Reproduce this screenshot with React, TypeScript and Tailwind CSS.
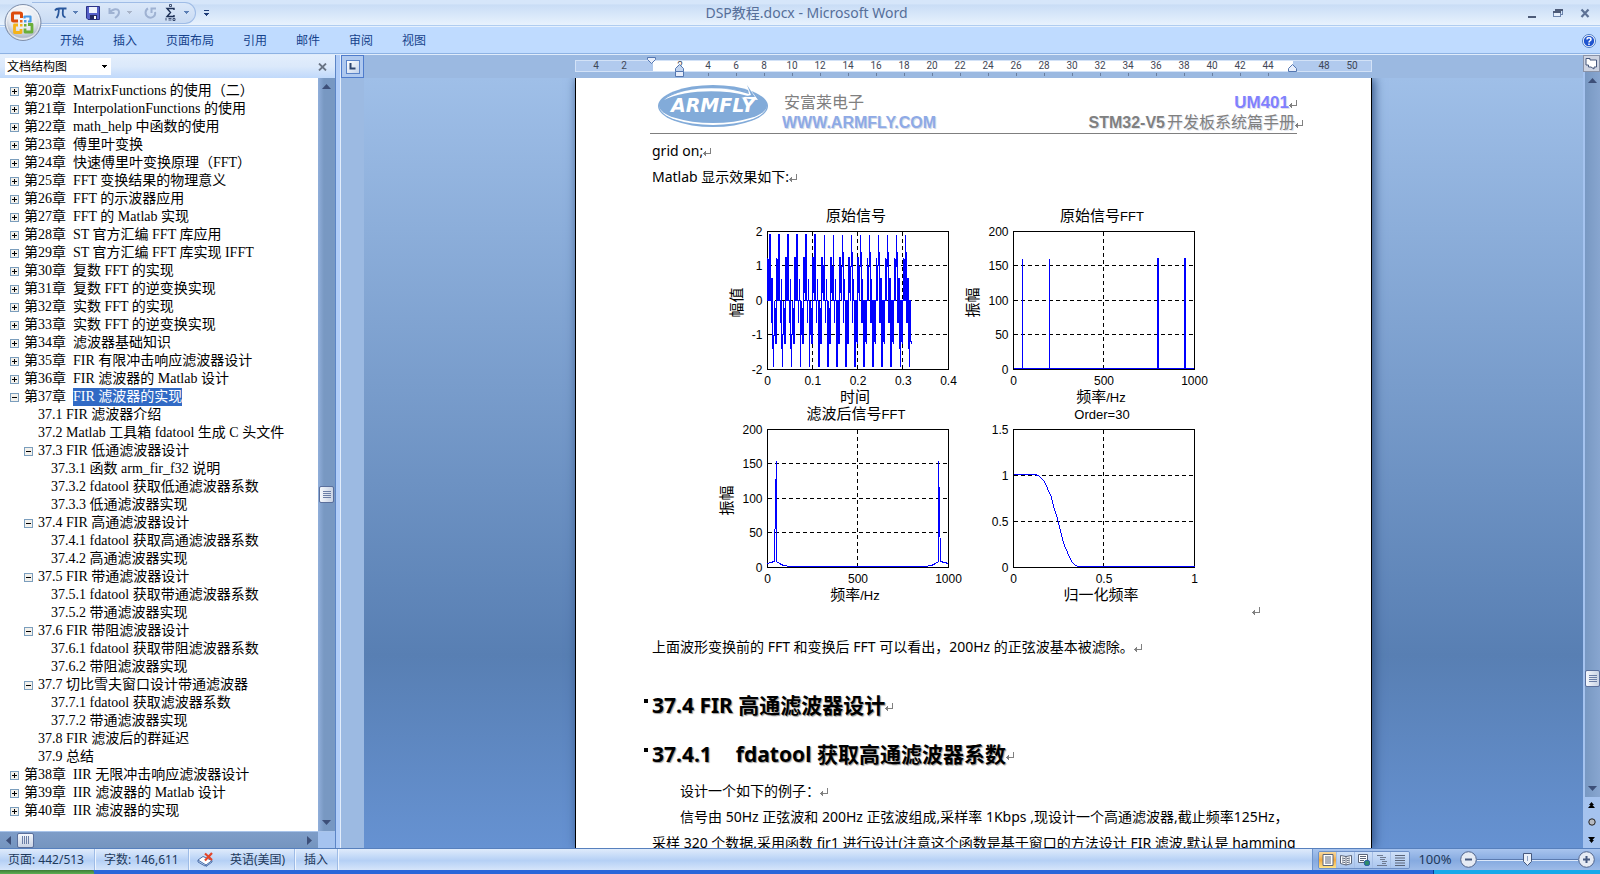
import React, { useState } from 'react';

interface TreeItem {
    level: number;
    chapter?: string;
    title: string;
    toggle?: 'plus' | 'minus';
    selected?: boolean;
}

const TREE: TreeItem[] = [
    { level: 0, chapter: '第20章', title: 'MatrixFunctions 的使用（二）', toggle: 'plus' },
    { level: 0, chapter: '第21章', title: 'InterpolationFunctions 的使用', toggle: 'plus' },
    { level: 0, chapter: '第22章', title: 'math_help 中函数的使用', toggle: 'plus' },
    { level: 0, chapter: '第23章', title: '傅里叶变换', toggle: 'plus' },
    { level: 0, chapter: '第24章', title: '快速傅里叶变换原理（FFT）', toggle: 'plus' },
    { level: 0, chapter: '第25章', title: 'FFT 变换结果的物理意义', toggle: 'plus' },
    { level: 0, chapter: '第26章', title: 'FFT 的示波器应用', toggle: 'plus' },
    { level: 0, chapter: '第27章', title: 'FFT 的 Matlab 实现', toggle: 'plus' },
    { level: 0, chapter: '第28章', title: 'ST 官方汇编 FFT 库应用', toggle: 'plus' },
    { level: 0, chapter: '第29章', title: 'ST 官方汇编 FFT 库实现 IFFT', toggle: 'plus' },
    { level: 0, chapter: '第30章', title: '复数 FFT 的实现', toggle: 'plus' },
    { level: 0, chapter: '第31章', title: '复数 FFT 的逆变换实现', toggle: 'plus' },
    { level: 0, chapter: '第32章', title: '实数 FFT 的实现', toggle: 'plus' },
    { level: 0, chapter: '第33章', title: '实数 FFT 的逆变换实现', toggle: 'plus' },
    { level: 0, chapter: '第34章', title: '滤波器基础知识', toggle: 'plus' },
    { level: 0, chapter: '第35章', title: 'FIR 有限冲击响应滤波器设计', toggle: 'plus' },
    { level: 0, chapter: '第36章', title: 'FIR 滤波器的 Matlab 设计', toggle: 'plus' },
    { level: 0, chapter: '第37章', title: 'FIR 滤波器的实现', toggle: 'minus', selected: true },
    { level: 1, title: '37.1 FIR 滤波器介绍' },
    { level: 1, title: '37.2 Matlab 工具箱 fdatool 生成 C 头文件' },
    { level: 1, title: '37.3 FIR 低通滤波器设计', toggle: 'minus' },
    { level: 2, title: '37.3.1 函数 arm_fir_f32 说明' },
    { level: 2, title: '37.3.2 fdatool 获取低通滤波器系数' },
    { level: 2, title: '37.3.3 低通滤波器实现' },
    { level: 1, title: '37.4 FIR 高通滤波器设计', toggle: 'minus' },
    { level: 2, title: '37.4.1 fdatool 获取高通滤波器系数' },
    { level: 2, title: '37.4.2 高通滤波器实现' },
    { level: 1, title: '37.5 FIR 带通滤波器设计', toggle: 'minus' },
    { level: 2, title: '37.5.1 fdatool 获取带通滤波器系数' },
    { level: 2, title: '37.5.2 带通滤波器实现' },
    { level: 1, title: '37.6 FIR 带阻滤波器设计', toggle: 'minus' },
    { level: 2, title: '37.6.1 fdatool 获取带阻滤波器系数' },
    { level: 2, title: '37.6.2 带阻滤波器实现' },
    { level: 1, title: '37.7 切比雪夫窗口设计带通滤波器', toggle: 'minus' },
    { level: 2, title: '37.7.1 fdatool 获取滤波器系数' },
    { level: 2, title: '37.7.2 带通滤波器实现' },
    { level: 1, title: '37.8 FIR 滤波后的群延迟' },
    { level: 1, title: '37.9 总结' },
    { level: 0, chapter: '第38章', title: 'IIR 无限冲击响应滤波器设计', toggle: 'plus' },
    { level: 0, chapter: '第39章', title: 'IIR 滤波器的 Matlab 设计', toggle: 'plus' },
    { level: 0, chapter: '第40章', title: 'IIR 滤波器的实现', toggle: 'plus' },
];

const LEVEL_PAD = ['pl-[10px]', 'pl-6', 'pl-[37px]'];

const TABS = ['开始', '插入', '页面布局', '引用', '邮件', '审阅', '视图'];

const UI_FONT = 'font-["Noto_Sans","Noto_Sans_CJK_SC",sans-serif]';

/* ---------- small glyphs ---------- */

const DropArrow = ({ className = 'text-[#5b7fb5]' }: { className?: string }) => (
    <svg width="5" height="3" viewBox="0 0 5 3" className={className} shapeRendering="crispEdges">
        <path d="M0 0h5v1H0zM1 1h3v1H1zM2 2h1v1H2z" fill="currentColor" />
    </svg>
);

const ReturnMark = () => (
    <svg width="8" height="8" viewBox="0 0 8 8" className="inline-block shrink-0" shapeRendering="crispEdges">
        <path d="M7.5 0v5.500H1" fill="none" stroke="#808080" />
        <path d="M0 5h1v1H0zM1 4h1v3H1zM2 3h1v5H2z" fill="#808080" />
    </svg>
);

const ScrollArrow = ({ d, label }: { d: string; label: string }) => (
    <button aria-label={label} className="flex h-[17px] w-full items-center justify-center">
        <svg width="9" height="9" viewBox="0 0 9 9">
            <path d={d} fill="#3d4f78" />
        </svg>
    </button>
);

const UP = 'M0 7 4.500 2 9 7z';
const DOWN = 'M0 2 4.500 7 9 2z';
const LEFT = 'M7 0 2 4.500 7 9z';
const RIGHT = 'M2 0 7 4.500 2 9z';

const OfficeButton = () => (
    <button aria-label="Office" className="absolute left-1 top-1 z-10 h-[38px] w-[38px]">
        <svg width="38" height="38" viewBox="0 0 38 38">
            <defs>
                <radialGradient id="orb" cx="50%" cy="30%" r="75%">
                    <stop offset="0" stopColor="#fdfdfe" />
                    <stop offset="0.550" stopColor="#e4e8ef" />
                    <stop offset="0.800" stopColor="#b3bccb" />
                    <stop offset="1" stopColor="#f4f7fb" />
                </radialGradient>
            </defs>
            <circle cx="19" cy="18.500" r="18" fill="url(#orb)" stroke="#7f90ac" />
            <circle cx="19" cy="18.500" r="16.500" fill="none" stroke="#fff" strokeOpacity="0.700" />
            <g fill="none" strokeLinejoin="round">
                <path d="M14 17H9.500Q8.500 17 8.500 16V10Q8.500 9 9.500 9H16Q17.500 9 17.500 10V14" stroke="#dd4c0c" strokeWidth="3" />
                <path d="M20.500 14.500V12.500H26.500V17.500H24" stroke="#4a9be6" strokeWidth="2.200" />
                <path d="M14 21H10.500V28.500H17V25" stroke="#f5b31a" strokeWidth="2.800" />
                <path d="M24 20.500H28V28H21V24.500" stroke="#6aae3a" strokeWidth="2.800" />
            </g>
            <path d="M16 16h2.500v2.500H16z" fill="#e8661c" />
            <path d="M20 16h2.500v2.500H20z" fill="#4a9be6" />
            <path d="M16 20h2.500v2.500H16z" fill="#f5b31a" />
            <path d="M20 20h2.500v2.500H20z" fill="#6aae3a" />
        </svg>
    </button>
);

/* ---------- title bar + tabs ---------- */

const TitleBar = () => (
    <header className="flex h-[26px] shrink-0 items-center border-b border-[#b0cdf0] bg-linear-to-b from-[#d6e6fa] from-15% via-[#c9ddf6] via-20% to-[#e8f2fd] pl-8">
        <div className="flex h-[22px] w-[164px] items-center gap-2 rounded-r-full border border-l-0 border-[#9fbce6] bg-linear-to-b from-[#dbe8f9] to-[#c9dbf3] pl-[22px]">
            <button aria-label="公式" className="flex items-center gap-1.5">
                <svg width="13" height="12" viewBox="0 0 13 12">
                    <path d="M1 3.500C2 1.500 3 1.500 5 1.500H12.500M4.800 2C4.800 6 4.500 9 2.500 11M9 2C8.500 7 8.500 10.500 11.500 10" fill="none" stroke="#29579c" strokeWidth="1.800" />
                </svg>
                <DropArrow />
            </button>
            <button aria-label="保存">
                <svg width="14" height="14" viewBox="0 0 14 14">
                    <path d="M.5.5h13v13H2L.5 12z" fill="#5560c8" stroke="#2b3387" />
                    <path d="M3 1h8v6H3z" fill="#eef3fc" />
                    <path d="M4 9h7v4.500H4z" fill="#23285e" />
                    <path d="M8 10h2v3H8z" fill="#fff" />
                </svg>
            </button>
            <button aria-label="撤消" className="flex items-center gap-1.5">
                <svg width="13" height="12" viewBox="0 0 13 12">
                    <path d="M1.500 1v5h5M2 5.500C4 2 10.500.5 11 5c.2 3-2 4.500-4 6" fill="none" stroke="#9fb2d2" strokeWidth="2" />
                </svg>
                <DropArrow className="text-[#a9b4c8]" />
            </button>
            <button aria-label="恢复" className="ml-1">
                <svg width="13" height="12" viewBox="0 0 13 12">
                    <path d="M4 1.500C1 3 .5 8 4 10c4 2 8-1 7-5M7.500 6V1.500H12" fill="none" stroke="#9fb2d2" strokeWidth="2" />
                </svg>
            </button>
            <button aria-label="求和" className="flex items-center gap-2">
                <svg width="11" height="17" viewBox="0 0 11 17">
                    <path d="M9 6V4.500H2L5.500 8.500 2 12.500H9V11" fill="none" stroke="#1c2f55" strokeWidth="1.400" />
                    <path d="M4.500.5h2v2h-2zM1 14v2.500M3.500 14.500h3M3.500 16h3M8 14.500h2v2H8z" fill="none" stroke="#1c2f55" strokeWidth="0.800" />
                </svg>
                <DropArrow />
            </button>
        </div>
        <button aria-label="自定义快速访问工具栏" className="ml-2 flex flex-col items-center gap-0.5">
            <span className="h-px w-[5px] bg-[#1e3c78]" />
            <DropArrow className="text-[#1e3c78]" />
        </button>
        <h1 className="min-w-0 flex-1 truncate pr-[124px] text-center text-sm leading-5 text-[#566f99]">
            DSP教程.docx - Microsoft Word
        </h1>
        <div className="flex w-[72px] items-center gap-[17px] pr-2">
            <button aria-label="最小化" className="h-3">
                <svg width="8" height="12" viewBox="0 0 8 12"><path d="M0 9h8v2H0z" fill="#4d5b78" /></svg>
            </button>
            <button aria-label="还原" className="h-3">
                <svg width="10" height="12" viewBox="0 0 10 12" shapeRendering="crispEdges">
                    <path d="M2.500 5V2.500H9.500V7.500H7" fill="none" stroke="#6c84ac" />
                    <path d="M.5 5.500h7v4h-7z" fill="#e4eefb" stroke="#6c84ac" />
                    <path d="M2 2h8v2H2zM0 4h8v2H0z" fill="#4d5b78" />
                </svg>
            </button>
            <button aria-label="关闭" className="h-3">
                <svg width="10" height="12" viewBox="0 0 10 12">
                    <path d="M1.500 2.500 8.500 10M8.500 2.500 1.500 10" stroke="#5e7295" strokeWidth="2.200" />
                </svg>
            </button>
        </div>
    </header>
);

const RibbonTabs = () => (
    <nav className="flex h-[29px] shrink-0 items-center gap-px border-b border-[#e0ecfb] bg-[#bfdbff] pl-[46px] pr-1 pt-0.5 shadow-[inset_0_1px_0_#e6f1fe,inset_0_-1px_0_#8db2e3]">
        {TABS.map((tab) => (
            <button key={tab} className="px-[14px] text-xs leading-5 text-[#15428b]">
                {tab}
            </button>
        ))}
        <button aria-label="帮助" className="ml-auto">
            <svg width="14" height="14" viewBox="0 0 14 14">
                <circle cx="7" cy="7" r="6.500" fill="#fff" stroke="#4b7bc4" />
                <circle cx="7" cy="7" r="5.200" fill="#1f55d0" />
                <path d="M5 5.500C5 3.200 9 3.300 9 5.400 9 6.800 7 6.700 7 8.400M7 9.500v1.400" fill="none" stroke="#fff" strokeWidth="1.500" />
            </svg>
        </button>
    </nav>
);

/* ---------- document map ---------- */

const Toggle = ({ kind }: { kind: 'plus' | 'minus' }) => (
    <button aria-label={kind === 'plus' ? '展开' : '折叠'} className="h-[9px] w-[9px] shrink-0">
        <svg width="9" height="9" viewBox="0 0 9 9" shapeRendering="crispEdges">
            <rect x="0.500" y="0.500" width="8" height="8" fill="#f3f1ec" stroke="#7b9ebd" />
            <path d={kind === 'plus' ? 'M2 4h5v1H2zM4 2h1v5H4z' : 'M2 4h5v1H2z'} fill="#000" />
        </svg>
    </button>
);

const VerticalThumb = () => (
    <div className="flex h-[17px] w-[15px] shrink-0 flex-col items-center justify-center gap-px rounded-xs border border-[#5a6f9c] bg-linear-to-r from-[#f4f7fc] to-[#c9d3e4]">
        {[0, 1, 2, 3].map((n) => (
            <span key={n} className="h-px w-2 bg-[#6b7ea6]" />
        ))}
    </div>
);

const DocumentMap = () => (
    <aside className="flex w-[336px] shrink-0 flex-col border-r border-[#5c85c6] bg-white">
        <div className="flex h-[23px] shrink-0 items-center justify-between bg-linear-to-b from-[#e3eefc] via-[#dbe9fb] to-[#c0d9fb] pl-[5px] pr-2">
            <label className="relative flex h-[17px] w-[106px] items-center bg-white">
                <select aria-label="窗格" className="w-full appearance-none bg-transparent pl-0.5 text-xs leading-4 text-black outline-none">
                    <option>文档结构图</option>
                </select>
                <span className="absolute right-1 top-[7px]">
                    <DropArrow className="text-black" />
                </span>
            </label>
            <button aria-label="关闭窗格">
                <svg width="9" height="8" viewBox="0 0 9 8">
                    <path d="M1 .5 8 7.500M8 .5 1 7.500" stroke="#6a7484" strokeWidth="1.800" />
                </svg>
            </button>
        </div>
        <div className="flex min-h-0 flex-1">
            <ul className='min-w-0 flex-1 overflow-hidden pt-1 font-["Liberation_Serif","Noto_Sans_CJK_SC",serif] text-sm leading-[18px] text-black'>
                {TREE.map((item) => (
                    <li key={(item.chapter ?? '') + item.title} className={`flex h-[18px] items-center gap-[5px] whitespace-nowrap ${LEVEL_PAD[item.level]}`}>
                        {item.toggle ? <Toggle kind={item.toggle} /> : <span className="w-[9px]" />}
                        {item.chapter && <span className="w-11">{item.chapter}</span>}
                        <a href="#doc" className={item.selected ? 'h-[18px] bg-[#316ac5] text-white' : ''}>
                            {item.title}
                        </a>
                    </li>
                ))}
            </ul>
            <div className="flex w-[17px] shrink-0 flex-col items-center bg-linear-to-r from-[#91afdb] to-[#7898c2] to-35%">
                <ScrollArrow d={UP} label="向上滚动" />
                <div className="flex-[391]" />
                <VerticalThumb />
                <div className="flex-[311]" />
                <ScrollArrow d={DOWN} label="向下滚动" />
            </div>
        </div>
        <div className="flex h-[17px] shrink-0 border-t border-[#a9c4ea] bg-[#a5c3ef]">
            <div className="flex flex-1 items-center bg-linear-to-b from-[#7e9dc8] to-[#7595bf]">
                <div className="w-[17px]"><ScrollArrow d={LEFT} label="向左滚动" /></div>
                <div className="flex h-[15px] w-[17px] items-center justify-center gap-px rounded-xs border border-[#5a6f9c] bg-linear-to-b from-[#f4f7fc] to-[#c9d3e4]">
                    {[0, 1, 2, 3].map((n) => (
                        <span key={n} className="h-2 w-px bg-[#6b7ea6]" />
                    ))}
                </div>
                <div className="ml-auto w-[17px]"><ScrollArrow d={RIGHT} label="向右滚动" /></div>
            </div>
            <div className="w-[17px]" />
        </div>
    </aside>
);

/* ---------- ruler ---------- */

const RULER: string[] = ['4', '2', '', ...Array.from({ length: 22 }, (_, i) => String((i + 1) * 2))];

const Ruler = () => (
    <div className="flex h-[23px] shrink-0 items-start justify-center bg-[#9bb9e1] pt-[5px]">
        <div className="relative flex w-[797px] shrink-0 flex-col">
            <div className="flex h-3 border border-[#d3e2f7] bg-linear-to-r from-[#b1caee] from-[77px] via-white via-[77px] to-white pl-1.5 font-[Roboto,sans-serif] text-[10px] leading-[10px] text-[#3f4757]">
                {RULER.map((n, i) => (
                    <span key={i} className="w-7 shrink-0 text-center">
                        {n}
                    </span>
                ))}
                <div className="ml-auto flex w-[78px] bg-[#b1caee] pl-[17px]">
                    <span className="w-7 text-center">48</span>
                    <span className="w-7 text-center">50</span>
                </div>
            </div>
            <div className="mt-px flex gap-[27px] pl-[133px]">
                {Array.from({ length: 21 }, (_, i) => (
                    <span key={i} className="h-[3px] w-px shrink-0 bg-[#6b7f9f]" />
                ))}
            </div>
            <svg width="40" height="22" viewBox="0 0 40 22" className="absolute -top-1 left-[72px]">
                <path d="M.5 1.500h8v2l-4 4-4-4z" fill="#e8eefb" stroke="#5577b0" />
                <path d="M28.500 15.500v-3l4-4 4 4v3z" fill="#c3d5f0" stroke="#5577b0" />
                <path d="M28.500 15.500h8v5h-8z" fill="#e8eefb" stroke="#5577b0" />
            </svg>
            <svg width="9" height="8" viewBox="0 0 9 8" className="absolute right-[75px] top-1">
                <path d="M.5 7.500v-3l4-4 4 4v3z" fill="#e8eefb" stroke="#5577b0" />
            </svg>
        </div>
    </div>
);

/* ---------- charts ---------- */

interface PlotProps {
    x: number;
    y: number;
    title: string;
    xLabel: string;
    yLabel?: string;
    yLabelX?: number;
    xTicks: string[];
    yTicks: string[];
    points: [number, number][];
    dense?: boolean;
}

const PLOT_W = 181;
const PLOT_H = 138;

// points are fractions of the axes, y counted from the bottom
const Plot = ({ x, y, title, xLabel, yLabel, yLabelX = 0, xTicks, yTicks, points, dense }: PlotProps) => {
    const px = points.map(([fx, fy]) => [Math.floor(fx * PLOT_W), Math.round((1 - fy) * PLOT_H)]);
    // a dense signal is drawn column by column so that the verticals stay solid
    const line = px.map(([cx, cy], i) => (i === 0 ? `M${cx} ${cy}` : dense ? `H${cx}V${cy}` : `L${cx} ${cy}`)).join('');

    return (
        <g transform={`translate(${x + 0.5} ${y + 0.5})`}>
            <g shapeRendering="crispEdges" fill="none" stroke="#000">
                {xTicks.slice(1, -1).map((t, i) => {
                    const gx = Math.floor(((i + 1) / (xTicks.length - 1)) * PLOT_W);
                    return <path key={t} d={`M${gx} 0V${PLOT_H}`} strokeDasharray="4 3" />;
                })}
                {yTicks.slice(1, -1).map((t, i) => {
                    const gy = Math.floor((1 - (i + 1) / (yTicks.length - 1)) * PLOT_H);
                    return <path key={t} d={`M0 ${gy}H${PLOT_W}`} strokeDasharray="4 3" />;
                })}
                <rect width={PLOT_W} height={PLOT_H} />
                <path d={line} stroke="#00f" />
            </g>
            <g fontSize="12">
                {xTicks.map((t, i) => (
                    <text key={t} x={(i / (xTicks.length - 1)) * PLOT_W} y={PLOT_H + 15} textAnchor="middle">
                        {t}
                    </text>
                ))}
                {yTicks.map((t, i) => (
                    <text key={t} x={-5} y={(1 - i / (yTicks.length - 1)) * PLOT_H + 4} textAnchor="end">
                        {t}
                    </text>
                ))}
            </g>
            <text x={PLOT_W / 2 - 2} y={-11} fontSize={title.startsWith('Order') ? 13 : 15} textAnchor="middle">
                {title.replace('FFT', '')}
                {title.endsWith('FFT') && <tspan fontSize="13">FFT</tspan>}
            </text>
            <text x={PLOT_W / 2 - 3} y={PLOT_H + 32} fontSize="15" textAnchor="middle">
                {xLabel.replace('/Hz', '')}
                {xLabel.endsWith('/Hz') && <tspan fontSize="13">/Hz</tspan>}
            </text>
            {yLabel && (
                <text transform={`translate(${yLabelX} ${PLOT_H / 2 + 2}) rotate(-90)`} fontSize="15" textAnchor="middle">
                    {yLabel}
                </text>
            )}
        </g>
    );
};

const N = 320;
const FS = 1000;

const signal: [number, number][] = Array.from({ length: N }, (_, n) => {
    const t = n / FS;
    const v = Math.sin(2 * Math.PI * 50 * t) + Math.sin(2 * Math.PI * 200 * t);
    return [t / 0.4, (v + 2) / 4];
});

const spectrum: [number, number][] = Array.from({ length: N }, (_, k) => {
    const f = (k * FS) / N;
    return [f / FS, [50, 200, 800, 950].includes(f) ? 161 / 200 : 0.006];
});

const leftHalf: [number, number][] = [
    [0, 0.028], [0.02, 0.034], [0.044, 0.042], [0.046, 0.5], [0.05, 0.77], [0.053, 0.04],
    [0.07, 0.03], [0.09, 0.014], [0.13, 0.01], [0.14, 0.006], [0.5, 0.006],
];
const filtered: [number, number][] = [
    ...leftHalf,
    ...[...leftHalf].reverse().filter(([, v]) => v !== 0.5).map(([f, v]): [number, number] => [1 - f, v]),
];

const response: [number, number][] = (
    [
        [0, 1.01], [0.12, 1.01], [0.14, 1], [0.155, 0.97], [0.172, 0.93], [0.19, 0.86], [0.21, 0.76], [0.225, 0.66],
        [0.24, 0.56], [0.25, 0.49], [0.27, 0.35], [0.285, 0.24], [0.3, 0.16], [0.315, 0.09], [0.33, 0.05],
        [0.345, 0.02], [0.36, 0.01], [1, 0.01],
    ] as [number, number][]
).map(([f, h]) => [f, h / 1.5]);

const Figure = () => (
    <svg width="560" height="425" viewBox="0 0 560 425" role="img" aria-label="滤波前后波形" className='font-["Liberation_Sans","Noto_Sans_CJK_SC",sans-serif]'>
        <Plot x={75} y={41} title="原始信号" xLabel="时间" yLabel="幅值" yLabelX={-26} xTicks={['0', '0.1', '0.2', '0.3', '0.4']} yTicks={['-2', '-1', '0', '1', '2']} points={signal} dense />
        <Plot x={321} y={41} title="原始信号FFT" xLabel="频率/Hz" yLabel="振幅" yLabelX={-36} xTicks={['0', '500', '1000']} yTicks={['0', '50', '100', '150', '200']} points={spectrum} dense />
        <Plot x={75} y={239} title="滤波后信号FFT" xLabel="频率/Hz" yLabel="振幅" yLabelX={-36} xTicks={['0', '500', '1000']} yTicks={['0', '50', '100', '150', '200']} points={filtered} />
        <Plot x={321} y={239} title="Order=30" xLabel="归一化频率" xTicks={['0', '0.5', '1']} yTicks={['0', '0.5', '1', '1.5']} points={response} />
    </svg>
);

/* ---------- page ---------- */

const Logo = () => (
    <svg width="112" height="46" viewBox="0 0 112 46" role="img" aria-label="ARMFLY">
        <ellipse cx="56" cy="23" rx="55" ry="21" fill="#82abd9" />
        <ellipse cx="56" cy="23.500" rx="53.500" ry="18.500" fill="#fff" />
        <ellipse cx="56" cy="22.500" rx="54" ry="17.500" fill="#82abd9" />
        <path d="M7 17C22 5 62 1 92 11L90 2 101 17 84 15 91 13C62 5 25 8 7 17z" fill="#fff" />
        <path d="M90 2 98 14 86 14 94 12z" fill="#82abd9" />
        <text x="56" y="29" fontSize="19" fontWeight="bold" fontStyle="italic" fill="#fff" textAnchor="middle" className='font-["DejaVu_Sans",sans-serif]'>
            ARMFLY
        </text>
    </svg>
);

const PageHeader = () => (
    <div className="-ml-0.5 -mr-1 flex h-14 border-b border-[#7f7f7f] pl-[7px]">
        <div className="pt-[5px]"><Logo /></div>
        <div className='ml-[13px] pt-[15px] font-["Liberation_Sans","Noto_Sans_CJK_SC",sans-serif] text-base leading-5'>
            <div className="pl-0.5 text-[#808080]">安富莱电子</div>
            <div className="font-bold text-[#8eaae6] [text-shadow:1px_1px_0_#d5dbe6]">WWW.ARMFLY.COM</div>
        </div>
        <div className='-mr-1.5 ml-auto pt-[15px] text-right font-["Liberation_Sans","Noto_Sans_CJK_SC",sans-serif] text-base leading-5 text-[#808080]'>
            <div className="pr-1.5 text-[17px] font-bold leading-5 text-[#8080ff] [text-shadow:1px_1px_0_#e0e0ea]">
                UM401
                <ReturnMark />
            </div>
            <div className="[text-shadow:1px_1px_0_#dfe4ec]">
                <b className="mr-0.5">STM32-V5</b>开发板系统篇手册
                <ReturnMark />
            </div>
        </div>
    </div>
);

const Bullet = () => <span className="absolute -left-2 top-2 h-1 w-1 bg-black" />;

const Page = () => (
    <article id="doc" className='mx-auto w-[797px] shrink-0 border-x border-black bg-white pl-[76px] pr-[78px] font-["Noto_Sans","Noto_Sans_CJK_SC",sans-serif] text-sm leading-[26px] text-black shadow-[2px_0_10px_#2f4f80]'>
        <PageHeader />
        <p className="mt-1">grid on;<ReturnMark /></p>
        <p>Matlab 显示效果如下:<ReturnMark /></p>
        <div className="flex items-end pl-10">
            <Figure />
            <ReturnMark />
        </div>
        <p className="mt-[19px]">上面波形变换前的 FFT 和变换后 FFT 可以看出，200Hz 的正弦波基本被滤除。<ReturnMark /></p>
        <h2 className="relative mt-[31px] text-[21px] font-bold leading-7 [text-shadow:1px_1px_1px_#999]">
            <Bullet />
            37.4 FIR 高通滤波器设计<ReturnMark />
        </h2>
        <h3 className="relative mt-[21px] text-[21px] font-bold leading-7 [text-shadow:1px_1px_1px_#999]">
            <Bullet />
            <span className="mr-6">37.4.1</span>fdatool 获取高通滤波器系数<ReturnMark />
        </h3>
        <p className="mt-[10px] pl-7">设计一个如下的例子：<ReturnMark /></p>
        <p className="whitespace-nowrap pl-7">
            信号由 50Hz 正弦波和 200Hz 正弦波组成,采样率 1Kbps ,现设计一个高通滤波器,截止频率125Hz，
        </p>
        <p className="whitespace-nowrap">
            采样 320 个数据,采用函数 fir1 进行设计(注意这个函数是基于窗口的方法设计 FIR 滤波,默认是 hamming
        </p>
    </article>
);

const PageScrollbar = () => (
    <div className="flex w-[17px] shrink-0 flex-col bg-[#a5c3ef]">
        <button aria-label="标尺" className="flex h-[17px] items-center justify-center border border-[#8a93a8] bg-[#ced4e2]">
            <svg width="13" height="13" viewBox="0 0 13 13">
                <path d="M1 1.500h4V3h6.500v7H9v2L6 10H3.500V8H1z" fill="#fff" stroke="#47587c" />
            </svg>
        </button>
        <div className="ml-0.5 flex flex-1 flex-col items-center bg-linear-to-r from-[#7898c2] to-[#88a6d0]">
            <ScrollArrow d={UP} label="向上滚动" />
            <div className="flex-[581]" />
            <VerticalThumb />
            <div className="flex-[93]" />
            <ScrollArrow d={DOWN} label="向下滚动" />
        </div>
        <div className="flex h-[51px] flex-col items-center justify-around">
            <button aria-label="前一页" className="h-[7px]">
                <svg width="7" height="7" viewBox="0 0 7 7"><path d="M3.500 0 6 3H4.500L7 6H0L2.500 3H1z" /></svg>
            </button>
            <button aria-label="选择浏览对象" className="h-2">
                <svg width="8" height="8" viewBox="0 0 8 8"><circle cx="4" cy="4" r="3.200" fill="#b6bac2" stroke="#222" /></svg>
            </button>
            <button aria-label="下一页" className="h-[7px]">
                <svg width="7" height="7" viewBox="0 0 7 7"><path d="M3.500 7 6 4H4.500L7 1H0L2.500 4H1z" /></svg>
            </button>
        </div>
    </div>
);

const DocumentArea = () => (
    <main className="flex min-w-0 flex-1 border-l-4 border-[#b1cdf8]">
        <div className="w-6 shrink-0 border-l border-[#e3edfb] bg-[#9cbae2]">
            <button aria-label="制表符" className="flex h-[23px] w-full items-center justify-center border border-[#4f7ccc] bg-[#afc9ef]">
                <span className="flex h-[14px] w-[14px] items-center justify-center border border-[#5a83c8] bg-linear-to-br from-white to-[#c3d3ec]">
                    <svg width="7" height="7" viewBox="0 0 7 7"><path d="M1.500 0v5.500H6.500" fill="none" stroke="#2e4670" strokeWidth="2" /></svg>
                </span>
            </button>
        </div>
        <div className="flex min-w-0 flex-1 flex-col">
            <Ruler />
            <div className="flex min-h-0 flex-1 overflow-hidden bg-linear-to-b from-[#9fbfe8] via-[#587fb3] via-75% to-[#6692d2]">
                <Page />
            </div>
        </div>
        <PageScrollbar />
    </main>
);

/* ---------- status bar ---------- */

const ViewIcon = ({ kind }: { kind: number }) => (
    <svg width="12" height="12" viewBox="0 0 12 12" fill="none" stroke="#5a6478">
        {kind === 0 && <path d="M1 .5h10v11H1zM3 3h6M3 5h6M3 7h6M3 9h6" fill="#fff" />}
        {kind === 1 && <path d="M.5 1.500 6 2.500 11.500 1.500v8L6 11 .5 9.500zM6 2v9M2 4l3 .5M2 6l3 .5M2 8l3 .5M7 4.500 10 4M7 6.500 10 6M7 8.500 10 8" fill="#fff" />}
        {kind === 2 && (
            <>
                <path d="M.5.5h9v8h-9zM2 2.500h6M2 4.500h6M2 6.500h4" fill="#fff" />
                <circle cx="9" cy="9" r="2.800" fill="#2e8b6a" stroke="#2b5ea8" />
            </>
        )}
        {kind === 3 && <path d="M1 1.500h6M4 3.500h6M4 5.500h5M6 7.500h5M6 9.500h4M1 11.500h10" strokeOpacity="0.800" />}
        {kind === 4 && <path d="M1 1.500h10M1 4h10M1 6.500h10M1 9h10M1 11.500h10" />}
    </svg>
);

const VIEWS = ['页面视图', '阅读版式视图', 'Web 版式视图', '大纲视图', '普通视图'];

const ZoomButton = ({ label, d }: { label: string; d: string }) => (
    <button aria-label={label} className="shrink-0">
        <svg width="17" height="17" viewBox="0 0 17 17">
            <circle cx="8.500" cy="8.500" r="7.800" fill="#e6ebf4" stroke="#52658c" />
            <path d={d} stroke="#46597f" strokeWidth="2" />
        </svg>
    </button>
);

const StatusBar = () => {
    const [zoom, setZoom] = useState(100);
    const cell = 'flex h-full items-center border-r border-[#9dbbe6] shadow-[1px_0_0_#eef5fe]';

    return (
        <footer className="flex h-[22px] shrink-0 items-center border-t border-[#5780bd] bg-linear-to-b from-[#dfebfb] via-[#b5d0f5] via-55% to-[#d6e5fa] text-xs text-[#1e395b]">
            <span className={`${cell} w-[95px] pl-2`}>页面: 442/513</span>
            <span className={`${cell} w-[94px] pl-[9px]`}>字数: 146,611</span>
            <button aria-label="校对" className="ml-2 mr-4">
                <svg width="17" height="15" viewBox="0 0 17 15">
                    <path d="M1 8 6 4.500 15 8.500 9 13z" fill="#fff" stroke="#4d6fa8" />
                    <path d="M1 8v2l7 4 1-1M9 13v1.500L15 10V8.500" fill="none" stroke="#4d6fa8" />
                    <path d="M8 1.500 15 8M15 1 8 8.500" stroke="#e2452a" strokeWidth="2.200" />
                </svg>
            </button>
            <span className={`${cell} w-[65px]`}>英语(美国)</span>
            <span className={`${cell} w-[43px] pl-[9px]`}>插入</span>
            <div className="ml-auto flex h-full items-center border-l border-[#6f94cc] bg-linear-to-b from-[#a8c4ee] via-[#86aae0] via-55% to-[#9dbbe8] pl-[5px] pr-[5px]">
                <div className="flex h-[18px] overflow-hidden rounded-xs border border-[#6d8fc6]">
                    {VIEWS.map((v, i) => (
                        <button
                            key={v}
                            aria-label={v}
                            className={`flex w-[18px] items-center justify-center border-r border-[#a6bfe6] last:border-r-0 ${i === 0 ? 'bg-linear-to-b from-[#f5d9a0] via-[#f2a93c] to-[#fde58a]' : 'bg-linear-to-b from-[#cfe0f8] to-[#a9c5ee]'}`}
                        >
                            <ViewIcon kind={i} />
                        </button>
                    ))}
                </div>
                <button className="w-[50px] text-center text-[13px]">{zoom}%</button>
                <ZoomButton label="缩小" d="M5 8.500h7" />
                <div className="relative flex h-5 w-[101px] items-center">
                    <span className="h-0.5 w-full border-t border-[#5b7bb0] bg-[#dce8fa]" />
                    <svg width="9" height="13" viewBox="0 0 9 13" className="absolute left-[46px] top-[3px]">
                        <path d="M.5.5h8v8l-4 4-4-4z" fill="#eaf0f9" stroke="#46597f" />
                        <path d="M4.500 3v5" stroke="#8ba0c4" />
                    </svg>
                    <input
                        type="range"
                        aria-label="显示比例"
                        min={10}
                        max={190}
                        value={zoom}
                        onChange={(e) => setZoom(Number(e.target.value))}
                        className="absolute inset-0 w-full opacity-0"
                    />
                </div>
                <ZoomButton label="放大" d="M5 8.500h7M8.500 5v7" />
            </div>
        </footer>
    );
};

export default function App() {
    return (
        <div className={`relative flex h-screen flex-col overflow-hidden bg-[#bfdbff] ${UI_FONT}`}>
            <OfficeButton />
            <TitleBar />
            <RibbonTabs />
            <div className="flex min-h-0 flex-1">
                <DocumentMap />
                <DocumentArea />
            </div>
            <StatusBar />
            <div className="flex h-1 shrink-0 bg-[#2a66d9]">
                <div className="w-[94px] rounded-tr-xs bg-linear-to-b from-[#3c7a36] to-[#5fb054]" />
                <div className="ml-auto w-[167px] border-l border-[#0b3a8c] bg-[#18a9ea]" />
            </div>
        </div>
    );
}
